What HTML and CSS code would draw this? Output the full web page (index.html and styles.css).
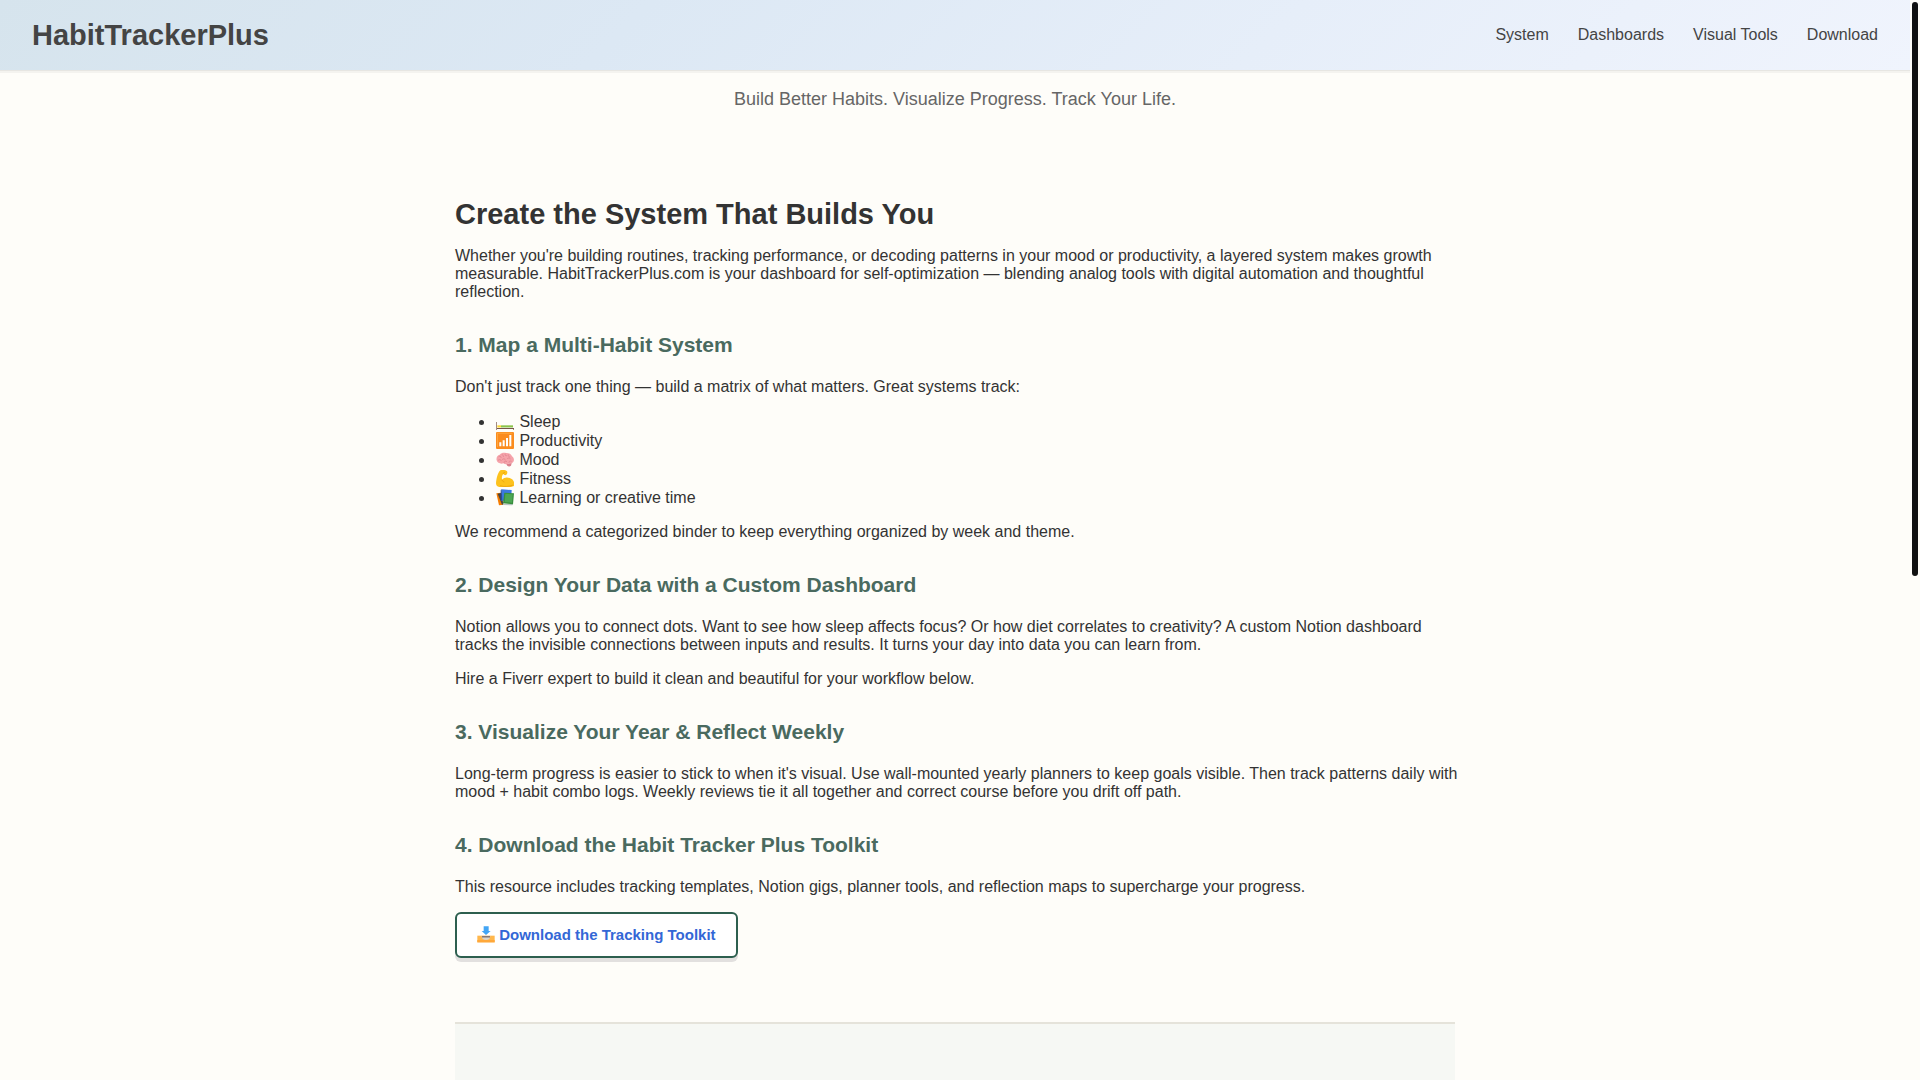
FILE: index.html
```html
<!DOCTYPE html>
<html lang="en">
<head>
    <meta charset="UTF-8">
    <meta name="viewport" content="width=device-width, initial-scale=1.0">
    <title>HabitTrackerPlus</title>
    <link rel="stylesheet" href="styles.css">
</head>
<body>
    <header>
        <div class="logo">HabitTrackerPlus</div>
        <nav>
            <a href="#system">System</a>
            <a href="#dashboards">Dashboards</a>
            <a href="#visual">Visual Tools</a>
            <a href="#download">Download</a>
        </nav>
    </header>

    <p class="tagline">Build Better Habits. Visualize Progress. Track Your Life.</p>

    <main>
        <h1>Create the System That Builds You</h1>
        <p>Whether you're building routines, tracking performance, or decoding patterns in your mood or productivity, a layered system makes growth measurable. HabitTrackerPlus.com is your dashboard for self-optimization — blending analog tools with digital automation and thoughtful reflection.</p>

        <h2 id="system">1. Map a Multi-Habit System</h2>
        <p>Don't just track one thing — build a matrix of what matters. Great systems track:</p>
        <ul>
            <li>
                <svg class="icon" viewBox="0 0 54 51" aria-hidden="true">
                    <path fill="#8bc34a" d="M15 37h36v7H15z"/>
                    <path fill="#fdd835" d="M4 37h11v7H4z"/>
                    <path fill="#fff" d="M4 44h47v2H4z"/>
                    <path fill="#795548" d="M1 27h2v18h51v6h-2v-3H3v3H1z"/>
                </svg>
                Sleep
            </li>
            <li>
                <svg class="icon" viewBox="0 0 54 51" aria-hidden="true">
                    <rect width="54" height="51" rx="3" fill="#fb8c1e"/>
                    <path fill="#ffa63d" d="M3 2h46v3H6v40H3z"/>
                    <path fill="#fff" d="M10 31h6v12h-6zM20 25h6v18h-6zM30 18h6v25h-6zM40 9h6v34h-6z"/>
                </svg>
                Productivity
            </li>
            <li>
                <svg class="icon" viewBox="0 0 54 51" aria-hidden="true">
                    <path fill="#d9808c" d="M31 38c1 7 8 11 14 6l2-8z"/>
                    <path fill="#f5a3aa" d="M2 28C0 20 4 13 11 11c5-6 13-7 19-5 8-1 16 4 18 10 6 4 8 13 3 18-3 4-8 4-12 3-6 4-13 3-17 0-8 3-18-1-20-9z"/>
                    <path fill="none" stroke="#dd7f8b" stroke-width="2" d="M8 17c5-3 8 0 7 4M17 11c4 0 6 3 5 7M28 8c-2 5 1 7 5 6M37 10c-2 4 1 8 6 8M6 28c5-4 9-2 10 2M18 26c5-5 10-2 10 2M24 36c-1-5 5-7 9-4M33 24c2-4 8-4 11 0M39 35c-1-4 4-6 8-4"/>
                </svg>
                Mood
            </li>
            <li>
                <svg class="icon" viewBox="0 0 54 51" aria-hidden="true">
                    <path fill="#fdc21c" d="M13 1c7-2 17-1 20 3 2 3 1 9-3 11-3 1-6 0-8-3-4 3-5 10-4 17 6-7 15-8 23-5 7 2 11 7 13 12v12c-6 3-12 3-18 3H10C3 50 0 46 0 40 1 27 5 8 13 1z"/>
                    <path fill="none" stroke="#e59a0b" stroke-width="2" d="M18 29c1 4 3 6 7 7M22 12c-1-3 2-6 5-4M12 47c12 4 27 3 39-2"/>
                </svg>
                Fitness
            </li>
            <li>
                <svg class="icon" viewBox="0 0 54 51" aria-hidden="true">
                    <path fill="#f57c00" d="M1 13l14-2 8 36-14 2z"/>
                    <path fill="#444" d="M5 14l10-2 7 34-4 1z"/>
                    <path fill="#3b78e0" d="M17 1l30 2-2 33-29-1z"/>
                    <path fill="#274d9a" d="M14 3l3-2 2 35-5-4z"/>
                    <path fill="#b9c4c2" d="M20 44l31 1-2 4-27-1z"/>
                    <path fill="#388e3c" d="M25 11l29 2-3 33-30-3z"/>
                    <path fill="#4ca653" d="M28 14l22 2-2 25-22-2z"/>
                </svg>
                Learning or creative time
            </li>
        </ul>
        <p>We recommend a categorized binder to keep everything organized by week and theme.</p>

        <h2 id="dashboards">2. Design Your Data with a Custom Dashboard</h2>
        <p>Notion allows you to connect dots. Want to see how sleep affects focus? Or how diet correlates to creativity? A custom Notion dashboard tracks the invisible connections between inputs and results. It turns your day into data you can learn from.</p>
        <p>Hire a Fiverr expert to build it clean and beautiful for your workflow below.</p>

        <h2 id="visual">3. Visualize Your Year &amp; Reflect Weekly</h2>
        <p>Long-term progress is easier to stick to when it's visual. Use wall-mounted yearly planners to keep goals visible. Then track patterns daily with mood + habit combo logs. Weekly reviews tie it all together and correct course before you drift off path.</p>

        <h2 id="download">4. Download the Habit Tracker Plus Toolkit</h2>
        <p>This resource includes tracking templates, Notion gigs, planner tools, and reflection maps to supercharge your progress.</p>
        <a class="button" href="#toolkit">
            <svg class="icon" viewBox="0 0 54 51" aria-hidden="true">
                <path fill="#ffb74d" d="M1 29h52v20H1z"/>
                <path fill="#ffa83a" d="M1 42h52v7H1z"/>
                <path fill="#d9d4cc" d="M14 29h26c0 9-5 13-13 13s-13-4-13-13z"/>
                <path fill="#5d4a45" d="M15 31h24v3H15z"/>
                <path fill="#42a5f5" d="M20 1h15v14h6L27 27 14 15h6z"/>
            </svg>
            Download the Tracking Toolkit
        </a>

        <section class="panel" id="toolkit"></section>
    </main>

    <div class="scroll-thumb"></div>
</body>
</html>
```

FILE: styles.css
```css
html {
    scrollbar-width: none;
    background-color: #fefdf9;
}
body {
    margin: 0;
    padding-right: 10px;
    font-family: "Liberation Sans", Arial, sans-serif;
    font-size: 16px;
    color: #333;
}
header {
    display: flex;
    justify-content: space-between;
    align-items: center;
    padding: 18px 32px;
    background: linear-gradient(135deg, #d6e4ed, #dce8f4 33%, #e6eef9 66%, #f0f4fd);
    box-shadow: 0 1px 0 rgba(0, 0, 0, 0.05), 0 3px 0 rgba(0, 0, 0, 0.04);
}
.logo {
    font-size: 29px;
    line-height: 34px;
    font-weight: bold;
    color: #444;
}
nav {
    display: flex;
    gap: 29px;
}
nav a {
    color: #444;
    text-decoration: none;
}
.tagline {
    margin: 18px 0 0;
    font-size: 18px;
    line-height: 22px;
    text-align: center;
    color: #666;
}
main {
    max-width: 1000px;
    margin: 0 auto;
    padding-top: 88px;
}
h1 {
    margin: 0 0 17px;
    font-size: 29px;
    line-height: 32px;
}
h2 {
    margin: 32px 0 21px;
    font-size: 21px;
    line-height: 24px;
    color: #4a6a5f;
}
p {
    margin: 16px 0;
    line-height: 18px;
}
/* text may hang slightly past the column */
main p {
    margin-right: -8px;
}
ul {
    margin: 16px 0;
    padding-left: 40px;
}
li {
    line-height: 19px;
}
.icon {
    width: 18px;
    height: 17px;
    margin: 0 1px;
    vertical-align: -3px;
}
.button {
    display: inline-block;
    padding: 12px 20px;
    font-size: 15px;
    line-height: 18px;
    font-weight: bold;
    color: #3367d6;
    text-decoration: none;
    background-color: #fff;
    border: 2px solid #2d5f4f;
    border-radius: 6px;
    box-shadow: 0 4px 0 #e2e0df;
}
.button .icon {
    margin: 0;
}
.panel {
    height: 960px;
    margin-top: 64px;
    background-color: #f6f8f4;
    border-top: 2px solid #e5e3da;
}
.scroll-thumb {
    position: fixed;
    top: 2px;
    right: 2px;
    width: 6px;
    height: calc(53% + 2px);
    border-radius: 3px;
    background-color: #111;
}
```
